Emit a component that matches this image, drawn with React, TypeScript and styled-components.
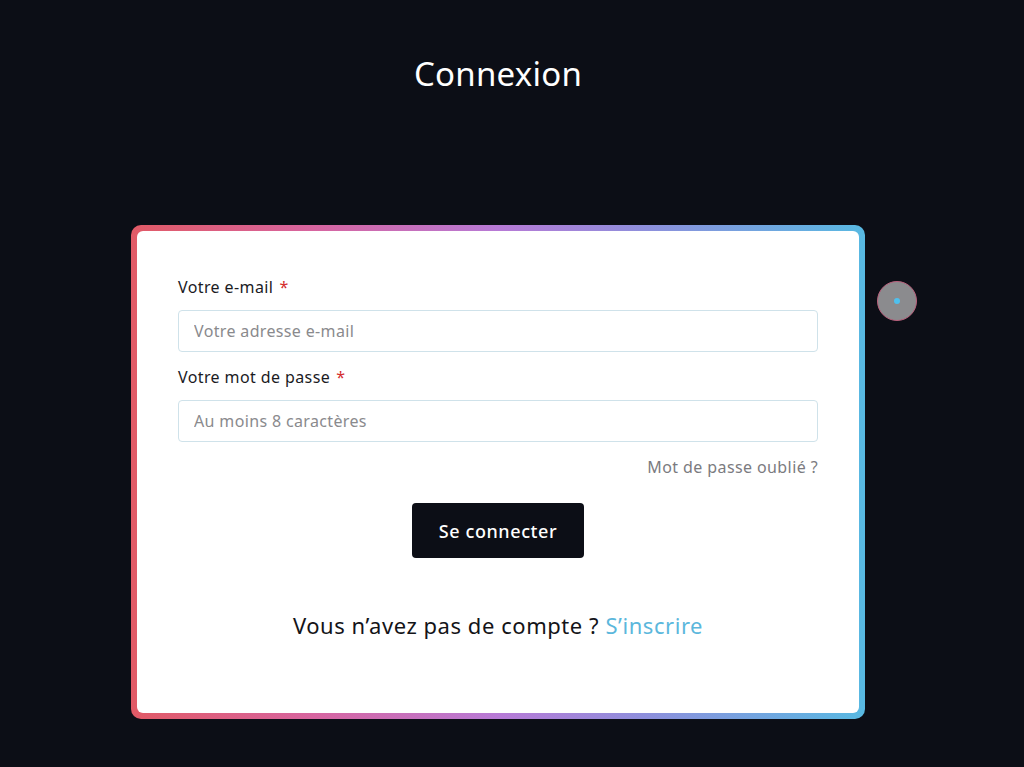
import React from "react";
import styled, { createGlobalStyle } from "styled-components";

const GlobalStyle = createGlobalStyle`
  html, body {
    margin: 0;
    padding: 0;
    background: #0c0e16;
  }
  body {
    font-family: "Noto Sans", "Open Sans", sans-serif;
    -webkit-font-smoothing: antialiased;
  }
  * { box-sizing: border-box; }
`;

const Page = styled.main`
  position: relative;
  min-height: 767px;
  padding: 0 28px 0 0;
  display: flex;
  flex-direction: column;
  align-items: center;
`;

const Title = styled.h1`
  margin: 52px 0 0;
  height: 44px;
  line-height: 44px;
  font-size: 33px;
  font-weight: 400;
  color: #ffffff;
  letter-spacing: 0.25px;
`;

const GradientFrame = styled.div`
  margin-top: 129px;
  width: 734px;
  padding: 6px;
  border-radius: 10px;
  background: linear-gradient(
    90deg,
    #e15a66 0%,
    #d765a0 25%,
    #b77ad6 50%,
    #8e8fdc 70%,
    #58b9e2 100%
  );
`;

const Card = styled.form`
  background: #ffffff;
  border-radius: 6px;
  height: 482px;
  padding: 46px 41px 0 41px;
  display: flex;
  flex-direction: column;
`;

const Label = styled.label<{ $first?: boolean }>`
  display: block;
  height: 20px;
  line-height: 20px;
  font-size: 16px;
  letter-spacing: 0.4px;
  color: #1b1b1f;
  margin-top: ${(p) => (p.$first ? "0" : "15px")};
`;

const Required = styled.span`
  color: #d42e2e;
  margin-left: 6px;
`;

const Input = styled.input`
  display: block;
  width: 100%;
  height: 42px;
  margin-top: 13px;
  padding: 0 15px;
  border: 1px solid #cfe2ea;
  border-radius: 4px;
  font-family: inherit;
  font-size: 16px;
  letter-spacing: 0.35px;
  color: #1b1b1f;
  background: #ffffff;
  outline: none;
  &::placeholder {
    color: #8a8a8d;
  }
`;

const ForgotRow = styled.div`
  margin-top: 15px;
  height: 20px;
  display: flex;
  justify-content: flex-end;
`;

const ForgotLink = styled.a`
  font-size: 16px;
  line-height: 20px;
  letter-spacing: 0.4px;
  color: #7b7b7f;
  text-decoration: none;
  cursor: pointer;
`;

const SubmitButton = styled.button`
  align-self: center;
  margin-top: 26px;
  width: 172px;
  height: 55px;
  border: none;
  border-radius: 4px;
  background: #0c0e16;
  color: #ffffff;
  font-family: inherit;
  font-size: 18px;
  font-weight: 500;
  letter-spacing: 0.6px;
  cursor: pointer;
`;

const SignupLine = styled.p`
  margin: 53px 0 0;
  height: 28px;
  line-height: 28px;
  text-align: center;
  font-size: 22px;
  letter-spacing: 0.55px;
  color: #141418;
`;

const SignupLink = styled.a`
  color: #5bb7dc;
  text-decoration: none;
  cursor: pointer;
`;

const CursorDot = styled.div`
  position: absolute;
  left: 877px;
  top: 281px;
  width: 40px;
  height: 40px;
  border-radius: 50%;
  background: #8b8b8e;
  border: 1.5px solid #b9607c;
  display: flex;
  align-items: center;
  justify-content: center;
  &::after {
    content: "";
    width: 6px;
    height: 6px;
    border-radius: 50%;
    background: #4fc0ee;
  }
`;

export default function App() {
  return (
    <>
      <GlobalStyle />
      <Page>
        <Title>Connexion</Title>
        <GradientFrame>
          <Card onSubmit={(e) => e.preventDefault()}>
            <Label $first htmlFor="email">
              Votre e-mail<Required>*</Required>
            </Label>
            <Input id="email" type="email" placeholder="Votre adresse e-mail" />
            <Label htmlFor="password">
              Votre mot de passe<Required>*</Required>
            </Label>
            <Input id="password" type="password" placeholder="Au moins 8 caractères" />
            <ForgotRow>
              <ForgotLink>Mot de passe oublié ?</ForgotLink>
            </ForgotRow>
            <SubmitButton type="submit">Se connecter</SubmitButton>
            <SignupLine>
              Vous n’avez pas de compte ? <SignupLink>S’inscrire</SignupLink>
            </SignupLine>
          </Card>
        </GradientFrame>
        <CursorDot />
      </Page>
    </>
  );
}
